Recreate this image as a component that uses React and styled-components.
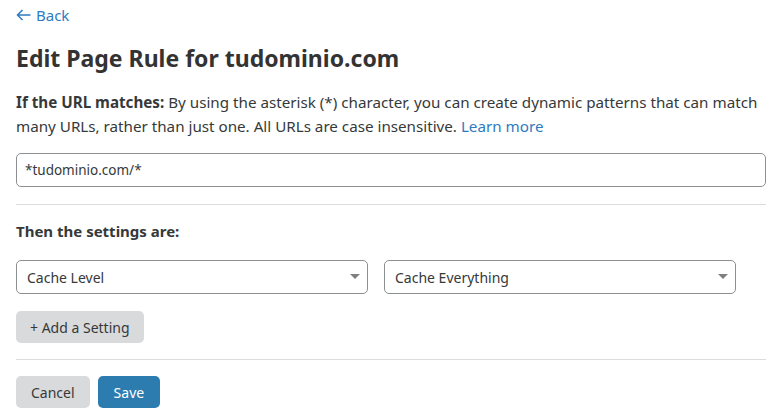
import React from "react";
import styled, { createGlobalStyle } from "styled-components";

const GlobalStyle = createGlobalStyle`
  body {
    margin: 0;
    background: #ffffff;
    font-family: "Noto Sans", "Open Sans", sans-serif;
    color: #36393a;
  }
`;

const Page = styled.div`
  padding: 4px 9px 0 16px;
`;

const BackLink = styled.a`
  display: inline-flex;
  align-items: center;
  gap: 5px;
  color: #2f7bbf;
  font-size: 15px;
  line-height: 22px;
  text-decoration: none;
`;

const Heading = styled.h1`
  font-size: 23px;
  font-weight: 700;
  margin: 17px 0 0;
  line-height: 30px;
  color: #333333;
`;

const Description = styled.p`
  font-size: 15.2px;
  line-height: 24px;
  margin: 17px 0 0;
`;

const Link = styled.a`
  color: #2f7bbf;
  text-decoration: none;
`;

const TextInput = styled.input`
  display: block;
  box-sizing: border-box;
  width: 100%;
  height: 34px;
  margin-top: 15px;
  padding: 0 8px;
  border: 1px solid #8d9093;
  border-radius: 5px;
  font-family: inherit;
  font-size: 13.5px;
  color: #36393a;
  outline: none;
`;

const Divider = styled.hr`
  border: none;
  border-top: 1px solid #dcdcdc;
  margin: ${(p) => p.$top || 17}px 0 0;
`;

const SubHeading = styled.h3`
  font-size: 15px;
  font-weight: 700;
  margin: 14px 0 0;
  line-height: 24px;
`;

const SelectRow = styled.div`
  display: flex;
  gap: 16px;
  margin-top: 17px;
`;

const Select = styled.div`
  box-sizing: border-box;
  width: 352px;
  height: 34px;
  border: 1px solid #8d9093;
  border-radius: 5px;
  display: flex;
  align-items: center;
  justify-content: space-between;
  padding: 0 7px 0 10px;
  font-size: 14px;
  color: #36393a;
`;

const Caret = styled.span`
  width: 0;
  height: 0;
  border-left: 5px solid transparent;
  border-right: 5px solid transparent;
  border-top: 5px solid #808080;
  margin-top: -2px;
`;

const Button = styled.button`
  box-sizing: border-box;
  height: 32px;
  padding: 0 ${(p) => p.$pad || 15}px;
  border: none;
  border-radius: 5px;
  font-family: inherit;
  font-size: 14px;
  background: ${(p) => (p.$primary ? "#2c7cb0" : "#d9dadb")};
  color: ${(p) => (p.$primary ? "#ffffff" : "#36393a")};
  cursor: pointer;
`;

const AddRow = styled.div`
  margin-top: 17px;
`;

const Actions = styled.div`
  display: flex;
  gap: 8px;
  margin-top: 16px;
`;

const ArrowLeft = () => (
  <svg width="15" height="12" viewBox="0 0 15 12" fill="none">
    <path
      d="M14.5 6H1.5M6.5 1L1.5 6L6.5 11"
      stroke="#2f7bbf"
      strokeWidth="1.5"
    />
  </svg>
);

export default function App() {
  return (
    <>
      <GlobalStyle />
      <Page>
        <BackLink href="#">
          <ArrowLeft />
          Back
        </BackLink>
        <Heading>Edit Page Rule for tudominio.com</Heading>
        <Description>
          <strong>If the URL matches:</strong> By using the asterisk (*)
          character, you can create dynamic patterns that can match many URLs,
          rather than just one. All URLs are case insensitive.{" "}
          <Link href="#">Learn more</Link>
        </Description>
        <TextInput defaultValue="*tudominio.com/*" />
        <Divider />
        <SubHeading>Then the settings are:</SubHeading>
        <SelectRow>
          <Select>
            Cache Level
            <Caret />
          </Select>
          <Select>
            Cache Everything
            <Caret />
          </Select>
        </SelectRow>
        <AddRow>
          <Button $pad={14}>+ Add a Setting</Button>
        </AddRow>
        <Divider $top={16} />
        <Actions>
          <Button>Cancel</Button>
          <Button $primary $pad={16}>
            Save
          </Button>
        </Actions>
      </Page>
    </>
  );
}
